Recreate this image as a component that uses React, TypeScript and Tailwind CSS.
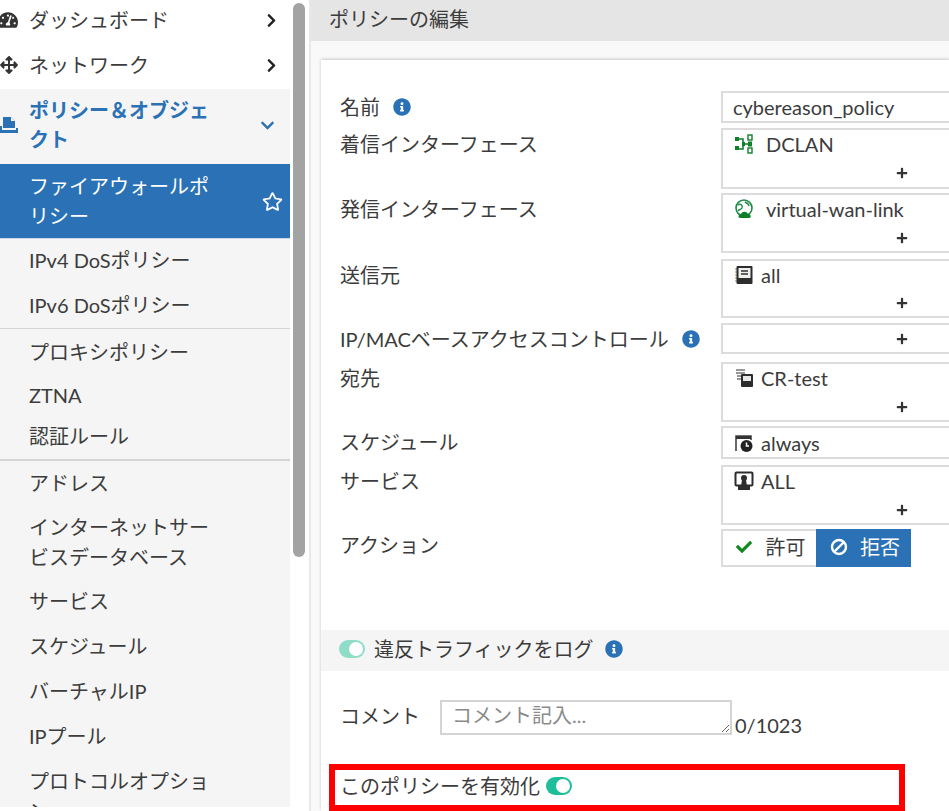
import type { ReactNode } from "react";
import {
  FaArrowsAlt,
  FaCheck,
  FaChevronDown,
  FaChevronRight,
  FaInfoCircle,
  FaPlus,
  FaRegStar,
  FaTachometerAlt,
} from "react-icons/fa";

function NavRow({ label, className }: { label: ReactNode; className: string }) {
  return (
    <div className={`flex items-center pl-[29px] pr-[78px] leading-[30px] ${className}`}>
      <span>{label}</span>
    </div>
  );
}

function PolicyIcon() {
  return (
    <svg viewBox="0 0 18 18" className="h-[18px] w-[18px] shrink-0 text-[#2a72b5]" fill="currentColor">
      <path d="M3 1h8l4 4v7H3z" />
      <path d="M11 1v4h4z" fill="#f5f5f5" />
      <path d="M0 10h2v4h14v-2h2v5H0z" />
    </svg>
  );
}

function InterfaceIcon() {
  return (
    <svg viewBox="0 0 20 20" className="h-[20px] w-[20px] shrink-0" fill="none">
      <path d="M5 5h4v10H5M9 10h5" stroke="#0f7f2a" strokeWidth="1.6" />
      <rect x="1" y="3" width="4" height="4" fill="#0f7f2a" />
      <rect x="1" y="12" width="4" height="4" fill="#0f7f2a" />
      <rect x="8" y="8" width="3" height="4" fill="#0f7f2a" />
      <rect x="14" y="1" width="4" height="5" stroke="#0f7f2a" strokeWidth="1.4" />
      <rect x="14" y="7.5" width="4" height="5" fill="#0f7f2a" />
      <rect x="14" y="14" width="4" height="5" stroke="#0f7f2a" strokeWidth="1.4" />
    </svg>
  );
}

function WanIcon() {
  return (
    <svg viewBox="0 0 20 20" className="h-[20px] w-[20px] shrink-0" fill="none">
      <circle cx="10" cy="9" r="8" stroke="#1d8a45" strokeWidth="1.6" />
      <path d="M4 6c3-2 5 1 4 3s-3 1-4 3M11 3c2 1 4 2 4 4" stroke="#1d8a45" strokeWidth="1.4" />
      <path d="M6 19c-2 0-2-4 1-4 1-3 6-3 7 0 3 0 4 4 1 4z" fill="#0f7f2a" />
    </svg>
  );
}

function AddressIcon() {
  return (
    <svg viewBox="0 0 20 20" className="h-[20px] w-[20px] shrink-0" fill="none">
      <path d="M1 4h2M1 7h2M1 10h2M1 13h2M1 16h2" stroke="#a8843c" strokeWidth="1.2" />
      <rect x="2.5" y="1" width="16" height="18" rx="1" fill="#2d2d2d" />
      <rect x="4.5" y="3" width="12" height="10" fill="#efefef" />
      <path d="M7 6h7M7 9h7" stroke="#333" strokeWidth="1.4" />
    </svg>
  );
}

function AddressGroupIcon() {
  return (
    <svg viewBox="0 0 20 20" className="h-[20px] w-[20px] shrink-0" fill="none">
      <path d="M2 2h9M2 5h9M3 8h4M3 11h4" stroke="#777" strokeWidth="1.5" />
      <rect x="7" y="6" width="12" height="13" rx="1" fill="#2d2d2d" />
      <rect x="9" y="8" width="8" height="5" fill="#e8e8e8" />
    </svg>
  );
}

function ScheduleIcon() {
  return (
    <svg viewBox="0 0 20 20" className="h-[20px] w-[20px] shrink-0" fill="none">
      <path d="M2 18V3h15v4" stroke="#444" strokeWidth="1.6" />
      <path d="M2 3h15v3H2z" fill="#333" />
      <circle cx="12.5" cy="13" r="6" fill="#222" />
      <path d="M12.5 9.5V13h2.5" stroke="#fff" strokeWidth="1.5" />
    </svg>
  );
}

function ServiceIcon() {
  return (
    <svg viewBox="0 0 20 20" className="h-[20px] w-[20px] shrink-0" fill="none">
      <rect x="1.5" y="1.5" width="17" height="13" rx="1" stroke="#2d2d2d" strokeWidth="2" />
      <circle cx="10" cy="7" r="3" fill="#2d2d2d" />
      <path d="M8 9h4l1 6h3v4H4v-4h3z" fill="#2d2d2d" />
    </svg>
  );
}

function DenyIcon() {
  return (
    <svg viewBox="0 0 18 18" className="h-[18px] w-[18px] shrink-0" fill="none" stroke="currentColor" strokeWidth="2.4">
      <circle cx="9" cy="9" r="7" />
      <path d="M13.5 4.5l-9 9" />
    </svg>
  );
}

function FormRow({ label, info, children, className }: { label: string; info?: boolean; children: ReactNode; className: string }) {
  return (
    <div className={`flex ${className}`}>
      <div className="flex h-[32px] w-[400px] shrink-0 items-center whitespace-nowrap pl-[19px]">
        <span>{label}</span>
        {info && <FaInfoCircle className="ml-[13px] text-[18px] text-[#2a72b5]" />}
      </div>
      {children}
    </div>
  );
}

function MultiField({ icon, value, height, gap }: { icon: ReactNode; value: string; height: string; gap: string }) {
  return (
    <div className={`flex w-[362px] shrink-0 flex-col border-2 border-[#dcdcdc] ${height}`}>
      <div className={`flex h-[28px] shrink-0 items-center pl-[11px] ${gap}`}>
        {icon}
        <span>{value}</span>
      </div>
      <div className="flex flex-1 items-center justify-center pt-[1px]">
        <FaPlus className="text-[12px] text-[#333]" />
      </div>
    </div>
  );
}

function Toggle({ tone }: { tone: string }) {
  return (
    <span className={`flex h-[18px] w-[26px] shrink-0 items-center justify-end rounded-full pr-[2px] ${tone}`}>
      <span className="h-[14px] w-[14px] rounded-full bg-white" />
    </span>
  );
}

export default function App() {
  return (
    <div className="flex h-[811px] w-[949px] overflow-hidden bg-white font-['Lato','Noto_Sans_CJK_JP',sans-serif] text-[20px] text-[#3c3c3c]">
      <aside className="flex h-[807px] w-[290px] shrink-0 flex-col overflow-hidden bg-[#f5f5f5]">
        <div className="flex h-[44px] shrink-0 items-center bg-white pb-[4px]">
          <FaTachometerAlt className="ml-[-2px] w-[20px] shrink-0 text-[18px] text-[#333]" />
          <span className="ml-[11px] flex-1">ダッシュボード</span>
          <FaChevronRight className="mr-[11px] text-[15px] text-[#222]" />
        </div>
        <div className="flex h-[45px] shrink-0 items-center bg-white pb-[3px]">
          <FaArrowsAlt className="w-[18px] shrink-0 text-[18px] text-[#333]" />
          <span className="ml-[11px] flex-1">ネットワーク</span>
          <FaChevronRight className="mr-[11px] text-[15px] text-[#222]" />
        </div>
        <div className="flex h-[74px] shrink-0 items-center pb-[2px] text-[#2a72b5]">
          <PolicyIcon />
          <span className="ml-[11px] w-[190px] font-bold leading-[29px]">ポリシー＆オブジェクト</span>
          <FaChevronDown className="ml-[41px] text-[15px]" />
        </div>
        <div className="mt-[1px] flex h-[75px] shrink-0 items-center border-b border-[#c9d7e5] bg-[#2a72b5] text-white">
          <span className="ml-[29px] w-[195px] leading-[30px]">ファイアウォールポリシー</span>
          <FaRegStar className="ml-[38px] text-[21px]" />
        </div>
        <NavRow label="IPv4 DoSポリシー" className="h-[44px] shrink-0 pb-[2px]" />
        <NavRow label="IPv6 DoSポリシー" className="h-[46px] shrink-0 border-b border-[#d4d4d4] pb-[2px]" />
        <NavRow label="プロキシポリシー" className="h-[44px] shrink-0 pt-[2px]" />
        <NavRow label="ZTNA" className="h-[44px] shrink-0" />
        <NavRow label="認証ルール" className="h-[44px] shrink-0 border-b-2 border-[#d4d4d4] pb-[4px]" />
        <NavRow label="アドレス" className="h-[43px] shrink-0" />
        <NavRow label="インターネットサービスデータベース" className="h-[75px] shrink-0" />
        <NavRow label="サービス" className="h-[44px] shrink-0" />
        <NavRow label="スケジュール" className="h-[45px] shrink-0" />
        <NavRow label="バーチャルIP" className="h-[45px] shrink-0" />
        <NavRow label="IPプール" className="h-[45px] shrink-0" />
        <NavRow label="プロトコルオプション" className="h-[75px] shrink-0" />
      </aside>

      <div className="flex h-full w-[19px] shrink-0 pl-[3px] pt-[3px]">
        <div className="h-[554px] w-[12px] rounded-full bg-[#a3a3a3]" />
      </div>

      <main className="flex min-w-0 flex-1 flex-col border-l-2 border-[#e8e8e8] bg-[#f9f9f9]">
        <div className="flex h-[41px] shrink-0 items-center bg-[#e5e5e5] pb-[3px] pl-[18px]">ポリシーの編集</div>
        <div className="ml-[10px] mt-[19px] flex-1 overflow-hidden bg-white shadow-[0_-1px_3px_rgba(0,0,0,0.2)]">
          <div className="pt-[31px]">
            <FormRow label="名前" info className="">
              <div className="flex h-[32px] w-[362px] shrink-0 items-center border-2 border-[#dcdcdc] pb-[1px] pl-[10px]">cybereason_policy</div>
            </FormRow>
            <FormRow label="着信インターフェース" className="mt-[5px]">
              <MultiField icon={<InterfaceIcon />} value="DCLAN" height="h-[61px]" gap="gap-[12px]" />
            </FormRow>
            <FormRow label="発信インターフェース" className="mt-[4px]">
              <MultiField icon={<WanIcon />} value="virtual-wan-link" height="h-[60px]" gap="gap-[12px]" />
            </FormRow>
            <FormRow label="送信元" className="mt-[6px]">
              <MultiField icon={<AddressIcon />} value="all" height="h-[59px]" gap="gap-[7px]" />
            </FormRow>
            <FormRow label="IP/MACベースアクセスコントロール" info className="mt-[5px]">
              <div className="flex h-[31px] w-[362px] shrink-0 items-center justify-center border-2 border-[#dcdcdc]">
                <FaPlus className="text-[12px] text-[#333]" />
              </div>
            </FormRow>
            <FormRow label="宛先" className="mt-[7px]">
              <MultiField icon={<AddressGroupIcon />} value="CR-test" height="h-[60px]" gap="gap-[7px]" />
            </FormRow>
            <FormRow label="スケジュール" className="mt-[4px]">
              <div className="flex h-[33px] w-[362px] shrink-0 items-center gap-[7px] border-2 border-[#dcdcdc] pl-[11px]">
                <ScheduleIcon />
                <span>always</span>
              </div>
            </FormRow>
            <FormRow label="サービス" className="mt-[6px]">
              <MultiField icon={<ServiceIcon />} value="ALL" height="h-[60px]" gap="gap-[7px]" />
            </FormRow>
            <FormRow label="アクション" className="mt-[4px]">
              <div className="flex h-[38px] items-stretch">
                <div className="flex w-[95px] items-center justify-center gap-[14px] border-2 border-r-0 border-[#dcdcdc] pb-[2px] pl-[2px]">
                  <FaCheck className="text-[16px] text-[#0f8a1f]" />
                  <span>許可</span>
                </div>
                <div className="flex w-[95px] items-center justify-center gap-[12px] bg-[#2a72b5] pb-[2px] pl-[3px] text-white">
                  <DenyIcon />
                  <span>拒否</span>
                </div>
              </div>
            </FormRow>
          </div>

          <div className="mt-[63px] flex h-[41px] items-center bg-[#f5f5f5] pb-[3px] pl-[18px]">
            <Toggle tone="bg-[#8fdcc8]" />
            <span className="ml-[9px]">違反トラフィックをログ</span>
            <FaInfoCircle className="ml-[11px] text-[18px] text-[#2a72b5]" />
          </div>

          <div className="mt-[29px] flex pl-[19px]">
            <span className="mt-[1px] w-[100px] shrink-0 leading-[30px]">コメント</span>
            <textarea
              readOnly
              placeholder="コメント記入..."
              className="h-[35px] w-[292px] shrink-0 border-2 border-[#d4d4d4] bg-white pl-[10px] leading-[27px] placeholder:text-[#8a8a8a]"
            />
            <span className="ml-[3px] mt-[10px] leading-[30px]">0/1023</span>
          </div>

          <div className="ml-[8px] mt-[24px] flex h-[47px] w-[576px] items-center border-[6px] border-[#ff0000] pb-[4px] pl-[5px]">
            <span>このポリシーを有効化</span>
            <span className="ml-[6px]">
              <Toggle tone="bg-[#1fbe9b]" />
            </span>
          </div>
        </div>
      </main>
    </div>
  );
}
